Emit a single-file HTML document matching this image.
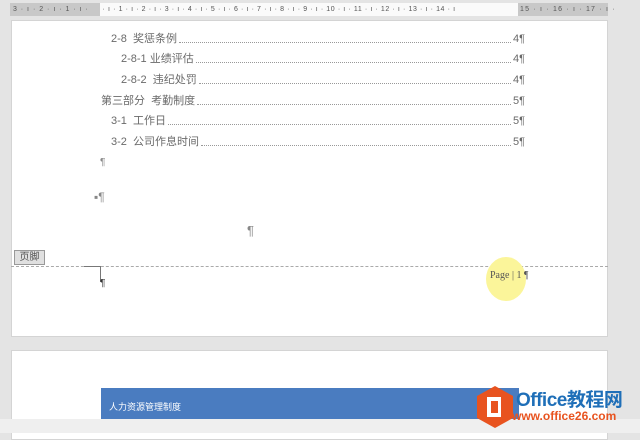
<!DOCTYPE html>
<html><head><meta charset="utf-8"><style>
*{margin:0;padding:0;box-sizing:border-box}
body{width:640px;height:433px;overflow:hidden;background:#e4e4e4;position:relative;font-family:"Liberation Sans","Noto Sans CJK SC",sans-serif;color:#6a6a6a}
.abs{position:absolute}
.ruler{left:10px;top:3px;width:598px;height:13px;background:#c8c8c8;font-size:7px;color:#555;line-height:13px;white-space:nowrap;overflow:hidden;letter-spacing:1px}
.rw{left:100px;top:3px;width:418px;height:13px;background:#fafafa}
.page{background:#fff;border:1px solid #d4d4d4}
.row{position:absolute;height:14px;font-size:11px;line-height:14px;display:flex;align-items:flex-end}
.dots{flex:1;border-bottom:1px dotted #999;margin:0 2px 3px 2px}
.pm{font-size:10px;color:#888}
</style></head><body>
<div class="abs ruler">&nbsp;3 · ı · 2 · ı · 1 · ı · &nbsp;&nbsp;&nbsp;&nbsp;&nbsp;</div>
<div class="abs rw"></div>
<div class="abs" style="left:100px;top:3px;width:418px;height:13px;font-size:7px;line-height:13px;color:#555;white-space:nowrap;letter-spacing:0.6px;overflow:hidden">&nbsp;· ı · 1 · ı · 2 · ı · 3 · ı · 4 · ı · 5 · ı · 6 · ı · 7 · ı · 8 · ı · 9 · ı · 10 · ı · 11 · ı · 12 · ı · 13 · ı · 14 · ı</div>
<div class="abs" style="left:520px;top:3px;font-size:7px;line-height:13px;color:#555;letter-spacing:1.2px">15 · ı · 16 · ı · 17 · ı ·</div>
<div class="abs page" style="left:11px;top:20px;width:597px;height:317px"></div>
<div class="abs page" style="left:11px;top:350px;width:597px;height:90px"></div>

<div class="row" style="left:111px;top:32px;width:414px"><span>2-8&nbsp; 奖惩条例</span><span class="dots"></span><span>4¶</span></div>
<div class="row" style="left:121px;top:52px;width:404px"><span>2-8-1 业绩评估</span><span class="dots"></span><span>4¶</span></div>
<div class="row" style="left:121px;top:73px;width:404px"><span>2-8-2&nbsp; 违纪处罚</span><span class="dots"></span><span>4¶</span></div>
<div class="row" style="left:101px;top:94px;width:424px"><span>第三部分&nbsp; 考勤制度</span><span class="dots"></span><span>5¶</span></div>
<div class="row" style="left:111px;top:114px;width:414px"><span>3-1&nbsp; 工作日</span><span class="dots"></span><span>5¶</span></div>
<div class="row" style="left:111px;top:135px;width:414px"><span>3-2&nbsp; 公司作息时间</span><span class="dots"></span><span>5¶</span></div>
<div class="abs pm" style="left:100px;top:157px">¶</div>
<div class="abs pm" style="left:94px;top:190px;font-size:12px">▪¶</div>
<div class="abs pm" style="left:247px;top:223px;font-size:13px">¶</div>

<div class="abs" style="left:14px;top:250px;width:31px;height:15px;background:#e0e0e0;border:1px solid #999;font-size:10px;line-height:13px;text-align:center;color:#555">页脚</div>
<div class="abs" style="left:11px;top:266px;width:597px;border-top:1px dashed #aaa"></div>
<div class="abs" style="left:84px;top:266px;width:17px;height:16px;border-top:1px solid #777;border-right:1px solid #777"></div>
<div class="abs" style="left:100px;top:278px;font-size:10px;color:#333">¶</div>
<div class="abs" style="left:486px;top:257px;width:40px;height:44px;border-radius:50%;background:#fbf59a"></div>
<div class="abs" style="left:490px;top:270px;font-family:'Liberation Serif',serif;font-size:10px;color:#555">Page | 1 ¶</div>

<div class="abs" style="left:101px;top:388px;width:418px;height:32px;background:#4a7cc0;color:#fff;font-size:9px;line-height:38px;padding-left:8px">人力资源管理制度</div>
<div class="abs" style="left:0;top:419px;width:640px;height:14px;background:#efefef"></div>
<svg class="abs" style="left:475px;top:384px" width="40" height="46" viewBox="0 0 40 46"><polygon points="20,2 38,12 38,34 20,44 2,34 2,12" fill="#e8531f"/><rect x="12" y="13" width="14" height="20" fill="#fff"/><rect x="16" y="17" width="7" height="12" fill="#e8531f"/></svg>
<div class="abs" style="left:516px;top:385px;font-size:19px;font-weight:bold;color:#1f6fb8;letter-spacing:-0.5px">Office教程网</div>
<div class="abs" style="left:512px;top:409px;font-size:12px;font-weight:bold;color:#e8531f">www.office26.com</div>
</body></html>
